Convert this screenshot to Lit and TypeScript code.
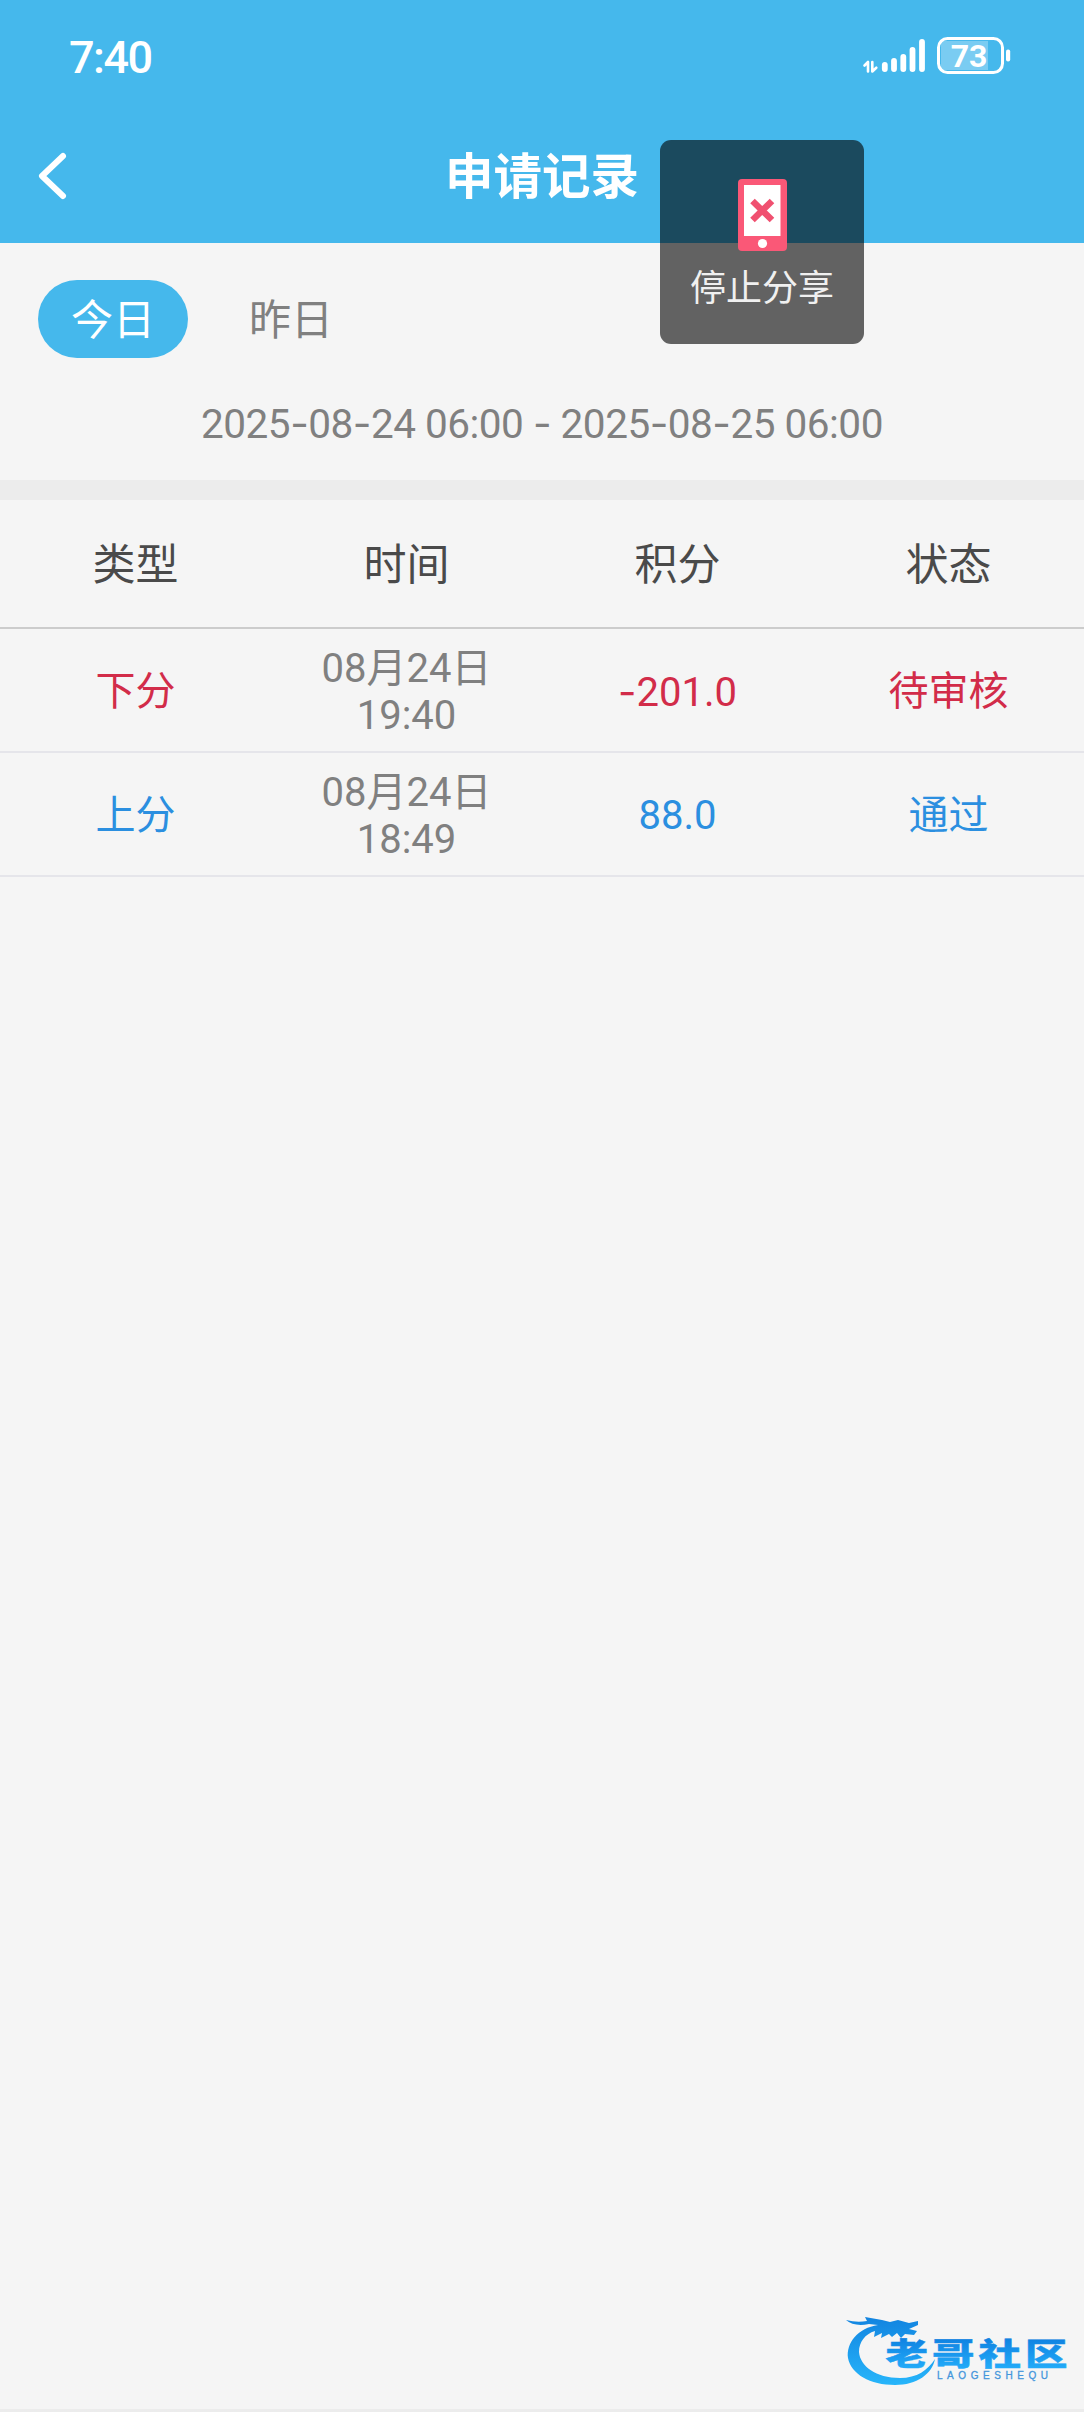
import { LitElement, html, css, svg } from "lit";
import { customElement } from "lit/decorators.js";

interface Entry {
  kind: string;
  tone: "out" | "in";
  day: string;
  time: string;
  points: string;
  status: string;
}

const ENTRIES: Entry[] = [
  { kind: "下分", tone: "out", day: "08月24日", time: "19:40", points: "-201.0", status: "待审核" },
  { kind: "上分", tone: "in", day: "08月24日", time: "18:49", points: "88.0", status: "通过" },
];

const HEADINGS = ["类型", "时间", "积分", "状态"];

// Hyphens use a wider face than the digits around them.
const dashed = (text: string) =>
  text.split(/(-)/).map((part) => (part === "-" ? html`<span class="dash">-</span>` : part));

@customElement("app-root")
export class AppRoot extends LitElement {
  static styles = css`
    :host {
      display: flex;
      flex-direction: column;
      position: relative;
      box-sizing: border-box;
      width: 100%;
      height: 2412px;
      overflow: hidden;
      background: #f5f5f5;
      border-bottom: 3px solid #ececec;
      font-family: Roboto, "Noto Sans CJK SC", sans-serif;
      color: #808080;
    }
    svg { display: block; }
    .top { height: 243px; background: #45b8ec; color: #fff; }
    .statusbar {
      height: 112px;
      display: flex;
      align-items: center;
      justify-content: space-between;
      padding: 0 72px 0 69px;
      box-sizing: border-box;
    }
    .clock { font-size: 45px; font-weight: 500; letter-spacing: -1.5px; line-height: 60px; padding-top: 4px; }
    .nav {
      height: 128px;
      display: grid;
      grid-template-columns: 100px 1fr 100px;
      align-items: center;
    }
    .back { padding-left: 36px; }
    .title { margin: 0; padding-top: 4px; text-align: center; font-size: 48.5px; line-height: 70px; font-weight: 700; }
    .tabs { display: flex; gap: 28px; padding: 37px 38px 0; }
    .tab {
      width: 150px;
      height: 78px;
      line-height: 82px;
      border-radius: 39px;
      text-align: center;
      font-size: 42px;
    }
    .active { background: #45b8ec; color: #fff; }
    .range {
      height: 113px;
      line-height: 113px;
      padding-top: 9px;
      text-align: center;
      font-size: 40.5px;
      letter-spacing: -0.5px;
      white-space: nowrap;
    }
    .dash { font-family: Inter, sans-serif; }
    .band { height: 20px; background: #ececec; }
    .row {
      display: grid;
      grid-template-columns: repeat(4, 1fr);
      align-items: center;
      text-align: center;
      height: 124px;
      padding-top: 4px;
      box-sizing: border-box;
      border-bottom: 2px solid #e5e5ea;
      font-size: 40px;
      line-height: 56px;
    }
    .head { height: 129px; padding-top: 2px; border-bottom-color: #ccc; color: #4a4a4a; font-size: 43px; }
    .when { line-height: 47px; }
    .out { color: #d22c49; }
    .in { color: #2b8fe0; }
    .toast {
      position: absolute;
      left: 660px;
      top: 140px;
      width: 204px;
      height: 204px;
      box-sizing: border-box;
      padding-top: 39px;
      border-radius: 11px;
      background: rgba(0, 0, 0, 0.6);
      display: flex;
      flex-direction: column;
      align-items: center;
      color: #f0f0f0;
      font-size: 36px;
      line-height: 77px;
    }
    .watermark { position: absolute; left: 844px; top: 2310px; }
    .brand { font: 900 42.5px "Noto Sans CJK SC", sans-serif; }
    .latin { font: 10px "Liberation Sans", sans-serif; }
  `;

  private statusIcons() {
    return svg`<svg width="150" height="44" viewBox="862 34 150 44">
      <g fill="none" stroke="#fff" stroke-width="2.6" stroke-linecap="round" stroke-linejoin="round">
        <path d="M864.5 65.5L868 62v9.5"/><path d="M872.3 62v9.5l4-3.8"/>
      </g>
      <g stroke="#fff" stroke-width="5.8" stroke-linecap="round">
        <path d="M884.8 64.8v4.2M894 61v8M903.3 57v12M912.5 50v19M922 42v27"/>
      </g>
      <rect x="941" y="41" width="47" height="29" fill="#7accf2"/>
      <rect x="938.5" y="38.5" width="64" height="34" rx="9" fill="none" stroke="#fff" stroke-width="3"/>
      <rect x="1006" y="49.5" width="4.2" height="12" rx="2" fill="#fff"/>
      <text x="969" y="67" text-anchor="middle" fill="#fff" font-family="Roboto, sans-serif" font-weight="700" font-size="32">73</text>
    </svg>`;
  }

  private logo() {
    return svg`<svg width="230" height="80" viewBox="844 2310 230 80">
      <defs>
        <linearGradient id="blue" gradientUnits="userSpaceOnUse" x1="0" y1="2317" x2="0" y2="2386">
          <stop offset="0" stop-color="#1284e0"/><stop offset="1" stop-color="#27b6fb"/>
        </linearGradient>
        <linearGradient id="word" gradientUnits="userSpaceOnUse" x1="0" y1="-38" x2="0" y2="4">
          <stop offset="0" stop-color="#0f80e0"/><stop offset="1" stop-color="#22aaf8"/>
        </linearGradient>
      </defs>
      <path fill="url(#blue)" d="M878 2325C858 2328 846 2343 848 2358C851 2374 870 2385 895 2385C917 2385 932 2374 935 2359C928 2370 917 2378 900 2378C876 2378 860 2366 859 2352C859 2342 865 2334 875 2331L874 2337L882 2333L881 2338L889 2334L892 2337L897 2333L901 2338L905 2334L914 2335L917 2331L909 2329L918 2325V2321L909 2323L898 2320L890 2322L882 2320L865 2317L867 2321Q857 2323 846 2320Q854 2327 869 2324Z"/>
      <text class="brand" fill="url(#word)" stroke="url(#word)" stroke-width=".6" transform="translate(885.5 2364.5) scale(1 .72)" textLength="182" lengthAdjust="spacing">老哥社区</text>
      <text class="latin" x="937" y="2378.5" fill="#4496dc" stroke="#4496dc" stroke-width=".3" textLength="111">LAOGESHEQU</text>
    </svg>`;
  }

  render() {
    return html`
      <header class="top">
        <div class="statusbar"><span class="clock">7:40</span>${this.statusIcons()}</div>
        <nav class="nav">
          <div class="back">
            <svg width="34" height="52" viewBox="0 0 34 52"><path d="M27 6L6 26L27 46" fill="none" stroke="#fff" stroke-width="6" stroke-linecap="round" stroke-linejoin="round"/></svg>
          </div>
          <h1 class="title">申请记录</h1>
        </nav>
      </header>
      <div class="tabs"><div class="tab active">今日</div><div class="tab">昨日</div></div>
      <div class="range">${dashed("2025-08-24 06:00 - 2025-08-25 06:00")}</div>
      <div class="band"></div>
      <div class="row head">${HEADINGS.map((h) => html`<div>${h}</div>`)}</div>
      ${ENTRIES.map(
        (e) => html`<div class="row">
          <div class=${e.tone}>${e.kind}</div>
          <div class="when">${e.day}<br />${e.time}</div>
          <div class=${e.tone}>${dashed(e.points)}</div>
          <div class=${e.tone}>${e.status}</div>
        </div>`
      )}
      <div class="toast">
        <svg width="49" height="72" viewBox="0 0 49 72">
          <rect width="49" height="72" rx="4" fill="#fa5877"/>
          <rect x="6" y="6" width="36.5" height="51" fill="#fff"/>
          <path d="M14.5 22L34 41M34 22L14.5 41" stroke="#f05070" stroke-width="6.5"/>
          <circle cx="24.5" cy="64.5" r="4.6" fill="#fff"/>
        </svg>
        停止分享
      </div>
      <div class="watermark">${this.logo()}</div>
    `;
  }
}
